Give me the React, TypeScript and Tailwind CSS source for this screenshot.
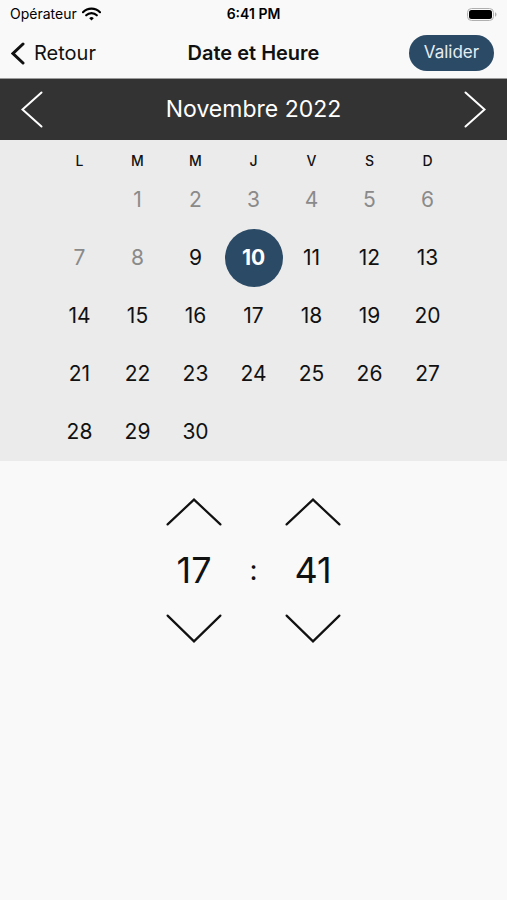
import React from "react";

const font = { fontFamily: "Inter, 'Liberation Sans', sans-serif" };

function Wifi() {
  return (
    <svg width="19" height="14" viewBox="0 0 19 14">
      <path d="M1 5.2 A12 12 0 0 1 18 5.2" fill="none" stroke="#000" strokeWidth="2.2" strokeLinecap="round" />
      <path d="M4.2 8.3 A7.5 7.5 0 0 1 14.8 8.3" fill="none" stroke="#000" strokeWidth="2.2" strokeLinecap="round" />
      <path d="M7.2 11.2 L9.5 13.4 L11.8 11.2 A3.3 3.3 0 0 0 7.2 11.2 Z" fill="#000" />
    </svg>
  );
}

function Battery() {
  return (
    <svg width="30" height="13" viewBox="0 0 30 13">
      <rect x="0.5" y="0.5" width="26" height="12" rx="4" fill="none" stroke="#b0b0b0" strokeWidth="1" />
      <rect x="2" y="2" width="23" height="9" rx="2.5" fill="#000" />
      <path d="M28 4.3 Q29.5 4.8 29.5 6.5 Q29.5 8.2 28 8.7 Z" fill="#b0b0b0" />
    </svg>
  );
}

function Chevron({ dir, color, w, h, sw }: { dir: "up" | "down" | "left" | "right"; color: string; w: number; h: number; sw: number }) {
  const p = sw / 2 + 0.5;
  let d = "";
  if (dir === "up") d = `M${p} ${h - p} L${w / 2} ${p} L${w - p} ${h - p}`;
  if (dir === "down") d = `M${p} ${p} L${w / 2} ${h - p} L${w - p} ${p}`;
  if (dir === "left") d = `M${w - p} ${p} L${p} ${h / 2} L${w - p} ${h - p}`;
  if (dir === "right") d = `M${p} ${p} L${w - p} ${h / 2} L${p} ${h - p}`;
  return (
    <svg width={w} height={h} viewBox={`0 0 ${w} ${h}`}>
      <path d={d} fill="none" stroke={color} strokeWidth={sw} strokeLinecap="round" strokeLinejoin="miter" />
    </svg>
  );
}

export default function App() {
  const days = ["L", "M", "M", "J", "V", "S", "D"];
  const cells: (number | null)[] = [null];
  for (let i = 1; i <= 30; i++) cells.push(i);
  while (cells.length < 35) cells.push(null);

  return (
    <div className="w-[507px] h-[900px] bg-[#f9f9f9] flex flex-col" style={font}>
      {/* status bar */}
      <div className="h-[28px] flex items-center justify-between px-[10px] relative">
        <div className="flex items-center gap-[5px]">
          <span className="text-[14px] text-black leading-none">Opérateur</span>
          <Wifi />
        </div>
        <span className="absolute left-1/2 -translate-x-1/2 text-[14px] font-semibold text-black leading-none">6:41 PM</span>
        <div>
          <Battery />
        </div>
      </div>
      {/* nav bar */}
      <div className="h-[51px] flex items-center justify-between relative border-b border-[#9c9c9c] pl-[11px] pr-[13px]">
        <div className="flex items-center gap-[9px]">
          <Chevron dir="left" color="#111" w={14} h={23} sw={3} />
          <span className="text-[20px] text-[#111]">Retour</span>
        </div>
        <span className="absolute left-1/2 -translate-x-1/2 text-[20px] font-semibold text-[#111]">Date et Heure</span>
        <button className="h-[36px] w-[85px] rounded-full bg-[#2b4a66] text-[#e6edf3] text-[17px] flex items-center justify-center">
          Valider
        </button>
      </div>
      {/* month header */}
      <div className="h-[61px] bg-[#333333] flex items-center justify-between px-[21px]">
        <Chevron dir="left" color="#fff" w={22} h={37} sw={2} />
        <span className="text-[23px] text-white">Novembre 2022</span>
        <Chevron dir="right" color="#fff" w={22} h={37} sw={2} />
      </div>
      {/* calendar */}
      <div className="bg-[#ebebeb] flex justify-center">
        <div className="w-[406px]">
          <div className="grid grid-cols-7 h-[31px] pt-[12px]">
            {days.map((d, i) => (
              <div key={i} className="text-center text-[14px] font-medium text-[#111] leading-[18px]">
                {d}
              </div>
            ))}
          </div>
          <div className="grid grid-cols-7">
            {cells.map((c, i) => {
              const past = c !== null && c < 9;
              const sel = c === 10;
              return (
                <div key={i} className="h-[58px] flex items-center justify-center">
                  {c !== null &&
                    (sel ? (
                      <div className="w-[58px] h-[58px] rounded-full bg-[#2b4a66] flex items-center justify-center text-white text-[21px] font-bold">
                        {c}
                      </div>
                    ) : (
                      <span className={`text-[21px] ${past ? "text-[#8a8a8a]" : "text-[#111]"}`}>{c}</span>
                    ))}
                </div>
              );
            })}
          </div>
        </div>
      </div>
      {/* time picker */}
      <div className="flex justify-center pt-[37px]">
        <div className="flex flex-col items-center w-[56px]">
          <Chevron dir="up" color="#111" w={56} h={28} sw={2.2} />
          <div className="h-[88px] flex items-center justify-center text-[36px] text-[#111]">17</div>
          <Chevron dir="down" color="#111" w={56} h={29} sw={2.2} />
        </div>
        <div className="w-[63px] flex justify-center pt-[28px]">
          <div className="h-[88px] flex items-center text-[28px] text-[#111]">:</div>
        </div>
        <div className="flex flex-col items-center w-[56px]">
          <Chevron dir="up" color="#111" w={56} h={28} sw={2.2} />
          <div className="h-[88px] flex items-center justify-center text-[36px] text-[#111]">41</div>
          <Chevron dir="down" color="#111" w={56} h={29} sw={2.2} />
        </div>
      </div>
    </div>
  );
}
